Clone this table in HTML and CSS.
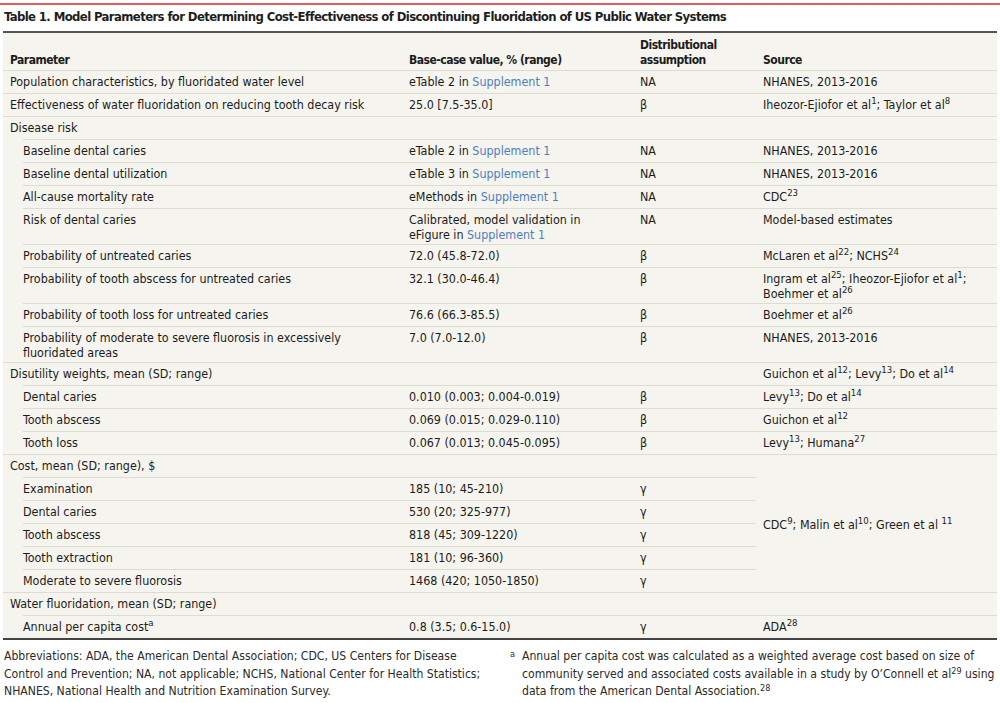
FILE: index.html
```html
<!DOCTYPE html>
<html lang="en">
<head>
<meta charset="utf-8">
<title>Table 1. Model Parameters</title>
<link rel="stylesheet" href="styles.css">
</head>
<body>
<div class="page">
  <div class="topbar"></div>
  <h1 class="title">Table 1. Model Parameters for Determining Cost-Effectiveness of Discontinuing Fluoridation of US Public Water Systems</h1>
  <table class="params">
    <colgroup>
      <col class="c1"><col class="c2"><col class="c3"><col class="c4">
    </colgroup>
    <thead>
      <tr><th>Parameter</th><th>Base-case value, % (range)</th><th>Distributional<br>assumption</th><th>Source</th></tr>
    </thead>
    <tbody>
      <tr><td>Population characteristics, by fluoridated water level</td><td>eTable 2 in <a class="lnk">Supplement 1</a></td><td>NA</td><td>NHANES, 2013-2016</td></tr>
      <tr><td>Effectiveness of water fluoridation on reducing tooth decay risk</td><td>25.0 [7.5-35.0]</td><td>β</td><td>Iheozor-Ejiofor et al<sup>1</sup>; Taylor et al<sup>8</sup></td></tr>
      <tr><td>Disease risk</td><td></td><td></td><td></td></tr>
      <tr class="sub"><td>Baseline dental caries</td><td>eTable 2 in <a class="lnk">Supplement 1</a></td><td>NA</td><td>NHANES, 2013-2016</td></tr>
      <tr class="sub"><td>Baseline dental utilization</td><td>eTable 3 in <a class="lnk">Supplement 1</a></td><td>NA</td><td>NHANES, 2013-2016</td></tr>
      <tr class="sub"><td>All-cause mortality rate</td><td>eMethods in <a class="lnk">Supplement 1</a></td><td>NA</td><td>CDC<sup>23</sup></td></tr>
      <tr class="sub"><td>Risk of dental caries</td><td>Calibrated, model validation in<br>eFigure in <a class="lnk">Supplement 1</a></td><td>NA</td><td>Model-based estimates</td></tr>
      <tr class="sub"><td>Probability of untreated caries</td><td>72.0 (45.8-72.0)</td><td>β</td><td>McLaren et al<sup>22</sup>; NCHS<sup>24</sup></td></tr>
      <tr class="sub"><td>Probability of tooth abscess for untreated caries</td><td>32.1 (30.0-46.4)</td><td>β</td><td>Ingram et al<sup>25</sup>; Iheozor-Ejiofor et al<sup>1</sup>;<br>Boehmer et al<sup>26</sup></td></tr>
      <tr class="sub"><td>Probability of tooth loss for untreated caries</td><td>76.6 (66.3-85.5)</td><td>β</td><td>Boehmer et al<sup>26</sup></td></tr>
      <tr class="sub"><td>Probability of moderate to severe fluorosis in excessively<br>fluoridated areas</td><td>7.0 (7.0-12.0)</td><td>β</td><td>NHANES, 2013-2016</td></tr>
      <tr><td>Disutility weights, mean (SD; range)</td><td></td><td></td><td>Guichon et al<sup>12</sup>; Levy<sup>13</sup>; Do et al<sup>14</sup></td></tr>
      <tr class="sub"><td>Dental caries</td><td>0.010 (0.003; 0.004-0.019)</td><td>β</td><td>Levy<sup>13</sup>; Do et al<sup>14</sup></td></tr>
      <tr class="sub"><td>Tooth abscess</td><td>0.069 (0.015; 0.029-0.110)</td><td>β</td><td>Guichon et al<sup>12</sup></td></tr>
      <tr class="sub"><td>Tooth loss</td><td>0.067 (0.013; 0.045-0.095)</td><td>β</td><td>Levy<sup>13</sup>; Humana<sup>27</sup></td></tr>
      <tr><td>Cost, mean (SD; range), $</td><td></td><td></td><td rowspan="6" class="span">CDC<sup>9</sup>; Malin et al<sup>10</sup>; Green et al <sup>11</sup></td></tr>
      <tr class="sub"><td>Examination</td><td>185 (10; 45-210)</td><td>γ</td></tr>
      <tr class="sub"><td>Dental caries</td><td>530 (20; 325-977)</td><td>γ</td></tr>
      <tr class="sub"><td>Tooth abscess</td><td>818 (45; 309-1220)</td><td>γ</td></tr>
      <tr class="sub"><td>Tooth extraction</td><td>181 (10; 96-360)</td><td>γ</td></tr>
      <tr class="sub"><td>Moderate to severe fluorosis</td><td>1468 (420; 1050-1850)</td><td>γ</td></tr>
      <tr><td>Water fluoridation, mean (SD; range)</td><td></td><td></td><td></td></tr>
      <tr class="sub"><td>Annual per capita cost<sup>a</sup></td><td>0.8 (3.5; 0.6-15.0)</td><td>γ</td><td>ADA<sup>28</sup></td></tr>
    </tbody>
  </table>
  <div class="notes">
    <p class="note">Abbreviations: ADA, the American Dental Association; CDC, US Centers for Disease Control and Prevention; NA, not applicable; NCHS, National Center for Health Statistics; NHANES, National Health and Nutrition Examination Survey.</p>
    <p class="note fn"><span class="mark">a</span><span>Annual per capita cost was calculated as a weighted average cost based on size of community served and associated costs available in a study by O’Connell et al<sup>29</sup> using data from the American Dental Association.<sup>28</sup></span></p>
  </div>
</div>
</body>
</html>
```
FILE: styles.css
```css
* { box-sizing: border-box; }
body {
  margin: 0;
  background: #fff;
  color: #1c1c1c;
  font-family: "DejaVu Sans Condensed", "Liberation Sans Narrow", "Roboto", sans-serif;
}
.page {
  padding: 0 3px 0 3px;
}
.topbar {
  height: 2px;
  margin: 3px -3px 0 -3px;
  background: #e35d61;
}
.title {
  margin: 0;
  padding: 4px 1px 6px;
  font-size: 13px;
  letter-spacing: -0.62px;
  line-height: 16px;
  font-weight: 700;
  color: #1e1e1e;
  border-bottom: 2px solid #555;
}
.params {
  width: 994px;
  table-layout: fixed;
  border-collapse: separate;
  border-spacing: 0;
  background: #f5f4ee;
  border-bottom: 2px solid #444;
  font-size: 12.4px;
}
.c1 { width: 399px; }
.c2 { width: 231px; }
.c3 { width: 123px; }
.c4 { width: 241px; }
.params th {
  text-align: left;
  vertical-align: bottom;
  font-size: 12px;
  letter-spacing: -0.5px;
  font-weight: 700;
  line-height: 15px;
  padding: 5px 7px 2px;
}
.params tr { height: 23px; }
.params td {
  vertical-align: top;
  line-height: 15px;
  padding: 3px 7px 2px;
  border-top: 1px solid #dddbd2;
}
.params .sub td:first-child {
  padding-left: 20px;
  border-top: none;
  padding-top: 4px;
  background: linear-gradient(#dddbd2, #dddbd2) no-repeat 20px 0 / calc(100% - 20px) 1px;
}
.params td.span { vertical-align: middle; }
.params sup {
  font-size: 9.5px;
  line-height: 0;
  vertical-align: 5px;
}
.lnk { color: #4f7fbf; text-decoration: none; }
.notes {
  display: grid;
  grid-template-columns: 492px 1fr;
  column-gap: 14px;
  padding: 8px 0 0 1px;
}
.note {
  margin: 0;
  font-size: 12.1px;
  line-height: 17.5px;
  color: #2a2a2a;
}
.fn { display: flex; }
.mark {
  flex: 0 0 12px;
  font-size: 9px;
  line-height: 12px;
}
.note sup { font-size: 9px; line-height: 0; vertical-align: 4px; }
```
